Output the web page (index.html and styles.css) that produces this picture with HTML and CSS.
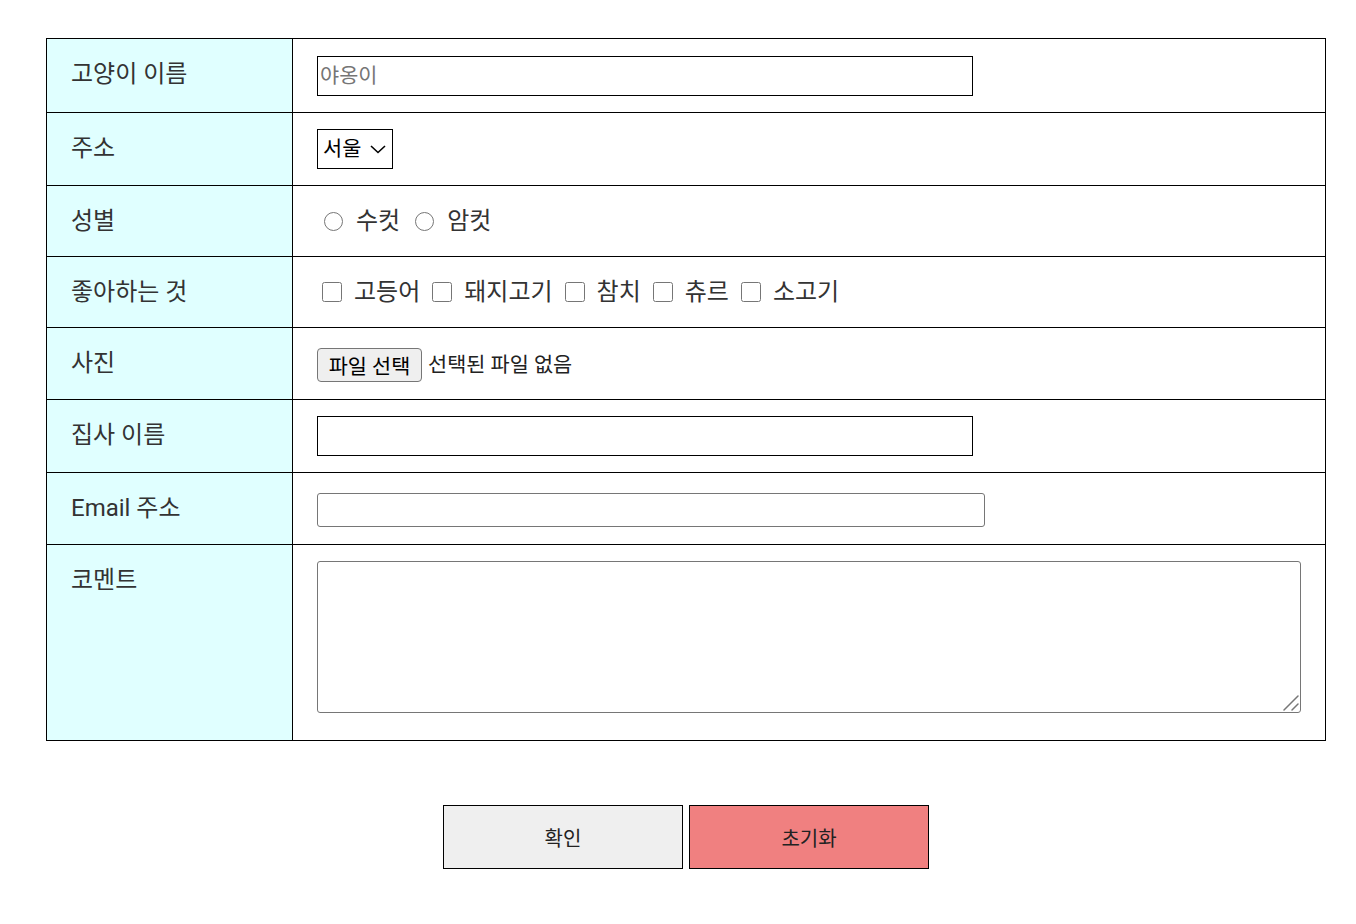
FILE: index.html
```html
<!DOCTYPE html>
<html lang="ko">
<head>
<meta charset="utf-8">
<title>고양이 등록</title>
<link rel="stylesheet" href="styles.css">
</head>
<body>
<form class="page">
  <table class="form-table">
    <colgroup><col class="col-label"><col></colgroup>
    <tr>
      <th class="label">고양이 이름</th>
      <td class="cell"><div class="field field-first"><input class="text-box" type="text" placeholder="야옹이"></div></td>
    </tr>
    <tr>
      <th class="label">주소</th>
      <td class="cell"><div class="field">
        <span class="select-wrap">
          <select class="select-box"><option>서울</option><option>부산</option></select>
          <svg class="chevron" width="16" height="9" viewBox="0 0 16 9"><path d="M1 1 L8 7.5 L15 1" fill="none" stroke="#000" stroke-width="1.6"/></svg>
        </span>
      </div></td>
    </tr>
    <tr>
      <th class="label">성별</th>
      <td class="cell"><div class="field options">
        <label class="opt"><input class="radio" type="radio" name="sex">수컷</label>
        <label class="opt"><input class="radio" type="radio" name="sex">암컷</label>
      </div></td>
    </tr>
    <tr>
      <th class="label">좋아하는 것</th>
      <td class="cell"><div class="field options checks">
        <label class="opt"><input class="check" type="checkbox">고등어</label>
        <label class="opt"><input class="check" type="checkbox">돼지고기</label>
        <label class="opt"><input class="check" type="checkbox">참치</label>
        <label class="opt"><input class="check" type="checkbox">츄르</label>
        <label class="opt"><input class="check" type="checkbox">소고기</label>
      </div></td>
    </tr>
    <tr>
      <th class="label">사진</th>
      <td class="cell"><div class="field field-file">
        <button type="button" class="file-btn">파일 선택</button><span class="file-name">선택된 파일 없음</span>
      </div></td>
    </tr>
    <tr>
      <th class="label">집사 이름</th>
      <td class="cell"><div class="field"><input class="text-box" type="text"></div></td>
    </tr>
    <tr>
      <th class="label">Email 주소</th>
      <td class="cell"><div class="field field-email"><input class="email-box" type="email"></div></td>
    </tr>
    <tr>
      <th class="label">코멘트</th>
      <td class="cell"><div class="field field-area">
        <textarea class="comment"></textarea>
        <svg class="grip" width="16" height="16" viewBox="0 0 16 16"><path d="M1 15 L15 1 M9 15 L15 9" fill="none" stroke="#777" stroke-width="1.5" stroke-linecap="round"/></svg>
      </div></td>
    </tr>
  </table>
  <div class="actions">
    <button type="submit" class="btn btn-ok">확인</button>
    <button type="reset" class="btn btn-reset">초기화</button>
  </div>
</form>
</body>
</html>
```

FILE: styles.css
```css
html, body {
  margin: 0;
  padding: 0;
  background: #fff;
}

.page {
  padding: 38px 0 0 46px;
  width: 1280px;
  font-family: Roboto, "Noto Sans CJK KR", sans-serif;
  color: #333;
}

.form-table {
  width: 1280px;
  border-collapse: collapse;
  table-layout: fixed;
}

.col-label {
  width: 246px;
}

.label {
  background: #e0ffff;
  border: 1px solid #000;
  padding: 16px 24px;
  text-align: left;
  vertical-align: top;
  font-weight: normal;
  font-size: 24px;
  line-height: 38px;
  color: #333;
}

.cell {
  border: 1px solid #000;
  padding: 16px 24px;
  vertical-align: top;
}

.field {
  display: flex;
  align-items: center;
  min-height: 38px;
}

.field-first {
  padding-top: 1px;
}

.text-box {
  box-sizing: border-box;
  width: 656px;
  height: 40px;
  margin: 0;
  padding: 1px 2px;
  border: 1px solid #000;
  border-radius: 0;
  font-family: Roboto, "Noto Sans CJK KR", sans-serif;
  font-size: 20.8px;
  color: #000;
  outline: none;
}

.text-box::placeholder {
  color: #757575;
}

.select-wrap {
  position: relative;
  display: inline-block;
}

.select-box {
  appearance: none;
  -webkit-appearance: none;
  box-sizing: border-box;
  width: 76px;
  height: 40px;
  margin: 0;
  padding: 0 0 0 5px;
  border: 1px solid #000;
  border-radius: 0;
  background: #fff;
  font-family: Roboto, "Noto Sans CJK KR", sans-serif;
  font-size: 20.8px;
  color: #000;
}

.chevron {
  position: absolute;
  right: 7px;
  top: 16px;
  pointer-events: none;
}

.options {
  gap: 8px;
}

.checks {
  gap: 7px;
}

.opt {
  display: inline-flex;
  align-items: center;
  font-size: 24px;
  line-height: 38px;
  color: #333;
}

.radio {
  width: 19px;
  height: 19px;
  margin: 0 13px 0 7px;
}

.check {
  width: 20px;
  height: 20px;
  margin: 0 12px 0 5px;
}

.field-file {
  min-height: 39px;
  align-items: flex-start;
}

.file-btn {
  box-sizing: border-box;
  width: 105px;
  height: 34px;
  margin: 4px 6px 0 0;
  padding: 0;
  border: 1px solid #767676;
  border-radius: 4px;
  background: #efefef;
  font-family: Roboto, "Noto Sans CJK KR", sans-serif;
  font-size: 20.8px;
  color: #000;
}

.file-name {
  font-size: 20.8px;
  line-height: 34px;
  margin-top: 4px;
  color: #222;
}

.field-email {
  min-height: 39px;
  align-items: flex-start;
}

.email-box {
  box-sizing: border-box;
  width: 668px;
  height: 34px;
  margin: 4px 0 0 0;
  padding: 1px 2px;
  border: 1px solid #767676;
  border-radius: 3px;
  font-family: Roboto, "Noto Sans CJK KR", sans-serif;
  font-size: 20.8px;
}

.field-area {
  display: block;
  position: relative;
  padding-bottom: 11px;
}

.comment {
  display: block;
  box-sizing: border-box;
  width: 100%;
  height: 152px;
  margin: 0;
  border: 1px solid #767676;
  border-radius: 3px;
  font-family: Roboto, "Noto Sans CJK KR", sans-serif;
  font-size: 20.8px;
  resize: none;
}

.grip {
  position: absolute;
  right: 2px;
  bottom: 13px;
  pointer-events: none;
}

.actions {
  display: flex;
  justify-content: center;
  gap: 6px;
  margin-top: 64px;
}

.btn {
  box-sizing: border-box;
  width: 240px;
  height: 64px;
  margin: 0;
  border: 1px solid #000;
  border-radius: 0;
  font-family: Roboto, "Noto Sans CJK KR", sans-serif;
  font-size: 20px;
  color: #222;
}

.btn-ok {
  background: #efefef;
}

.btn-reset {
  background: #f08080;
}
```
